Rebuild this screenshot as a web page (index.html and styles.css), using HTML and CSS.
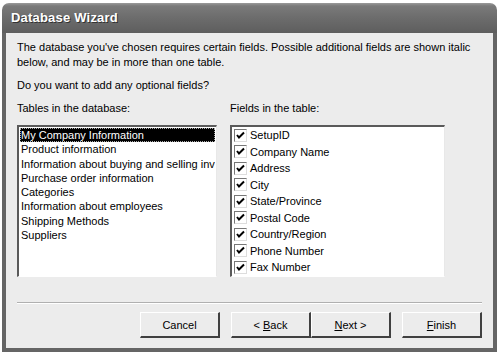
FILE: index.html
```html
<!DOCTYPE html>
<html lang="en">
<head>
  <meta charset="UTF-8">
  <title>Database Wizard</title>
  <link rel="stylesheet" href="styles.css">
</head>
<body>
  <div class="window">
    <div class="titlebar">Database Wizard</div>
    <div class="content">
      <p class="intro">The database you've chosen requires certain fields. Possible additional fields are shown italic below, and may be in more than one table.</p>
      <p class="question">Do you want to add any optional fields?</p>

      <div class="columns">
        <div class="col col-tables">
          <div class="label">Tables in the database:</div>
          <ul class="listbox tables">
            <li class="selected">My Company Information</li>
            <li>Product information</li>
            <li>Information about buying and selling inv</li>
            <li>Purchase order information</li>
            <li>Categories</li>
            <li>Information about employees</li>
            <li>Shipping Methods</li>
            <li>Suppliers</li>
          </ul>
        </div>
        <div class="col col-fields">
          <div class="label">Fields in the table:</div>
          <ul class="listbox fields">
            <li><span class="check"></span>SetupID</li>
            <li><span class="check"></span>Company Name</li>
            <li><span class="check"></span>Address</li>
            <li><span class="check"></span>City</li>
            <li><span class="check"></span>State/Province</li>
            <li><span class="check"></span>Postal Code</li>
            <li><span class="check"></span>Country/Region</li>
            <li><span class="check"></span>Phone Number</li>
            <li><span class="check"></span>Fax Number</li>
          </ul>
        </div>
      </div>

      <div class="separator"></div>

      <div class="buttons">
        <button class="btn">Cancel</button>
        <button class="btn btn-back">&lt; <u>B</u>ack</button>
        <button class="btn btn-next"><u>N</u>ext &gt;</button>
        <button class="btn btn-finish"><u>F</u>inish</button>
      </div>
    </div>
  </div>
</body>
</html>
```

FILE: styles.css
```css
body {
  margin: 0;
  background: #fff;
  font-family: 'Liberation Sans', sans-serif;
  font-size: 11px;
  color: #000;
}
.window {
  margin: 3px 0 0 2px;
  width: 495px;
}
.titlebar {
  height: 30px;
  box-sizing: border-box;
  padding: 7px 0 0 9px;
  background: linear-gradient(to bottom, #9a9a9a 0, #7a7a7a 3px, #6c6c6c 50%, #5e5e5e 100%);
  border-radius: 7px 7px 0 0;
  color: #fff;
  font-weight: bold;
  font-size: 13px;
  text-shadow: 1px 1px 0 #333;
  letter-spacing: 0.2px;
}
.content {
  height: 319px;
  box-sizing: border-box;
  background: #ececec;
  border: 4px solid #656565;
  border-top: 0;
  padding: 7px 11px 0 11px;
}
.intro {
  margin: 0;
  line-height: 15px;
  width: 462px;
}
.question {
  margin: 8px 0 0;
  line-height: 15px;
}
.columns {
  display: flex;
  gap: 13px;
  margin-top: 8px;
}
.label {
  line-height: 15px;
  margin-bottom: 9px;
}
.col-tables {
  width: 200px;
}
.col-fields {
  width: 215px;
}
.listbox {
  list-style: none;
  margin: 0;
  padding: 1px;
  height: 152px;
  box-sizing: border-box;
  background: #fff;
  border-top: 2px solid #5a5a5a;
  border-left: 2px solid #5a5a5a;
  border-right: 1px solid #e8e8e8;
  border-bottom: 1px solid #fff;
  overflow: hidden;
}
.tables li {
  height: 14.3px;
  line-height: 14px;
  padding-left: 1px;
  white-space: nowrap;
  overflow: hidden;
}
.tables li.selected {
  background: #000;
  color: #fff;
  outline: 1px dotted #aaa;
  outline-offset: -1px;
}
.fields {
  padding-top: 0;
}
.fields li {
  display: flex;
  align-items: center;
  height: 16.5px;
}
.check {
  width: 11px;
  height: 11px;
  margin: 0 3px 0 1px;
  border-top: 1px solid #777;
  border-left: 1px solid #777;
  border-right: 1px solid #ddd;
  border-bottom: 1px solid #ddd;
  background: #fff url("data:image/svg+xml;utf8,<svg xmlns='http://www.w3.org/2000/svg' width='11' height='11'><path d='M2 5 L4 7.5 L9 2.5' fill='none' stroke='black' stroke-width='2'/></svg>") no-repeat center;
}
.separator {
  margin: 25px 0 0;
  height: 0;
  border-top: 1px solid #b0b0b0;
  border-bottom: 1px solid #fff;
}
.buttons {
  display: flex;
  justify-content: flex-end;
  margin-top: 8px;
}
.btn {
  width: 80px;
  height: 26px;
  background: #ececec;
  font-family: 'Liberation Sans', sans-serif;
  font-size: 11px;
  color: #000;
  border-top: 1px solid #fff;
  border-left: 1px solid #fff;
  border-right: 2px solid #404040;
  border-bottom: 2px solid #404040;
  padding: 0;
}
.btn-back {
  margin-left: 11px;
}
.btn-finish {
  margin-left: 11px;
}
```
